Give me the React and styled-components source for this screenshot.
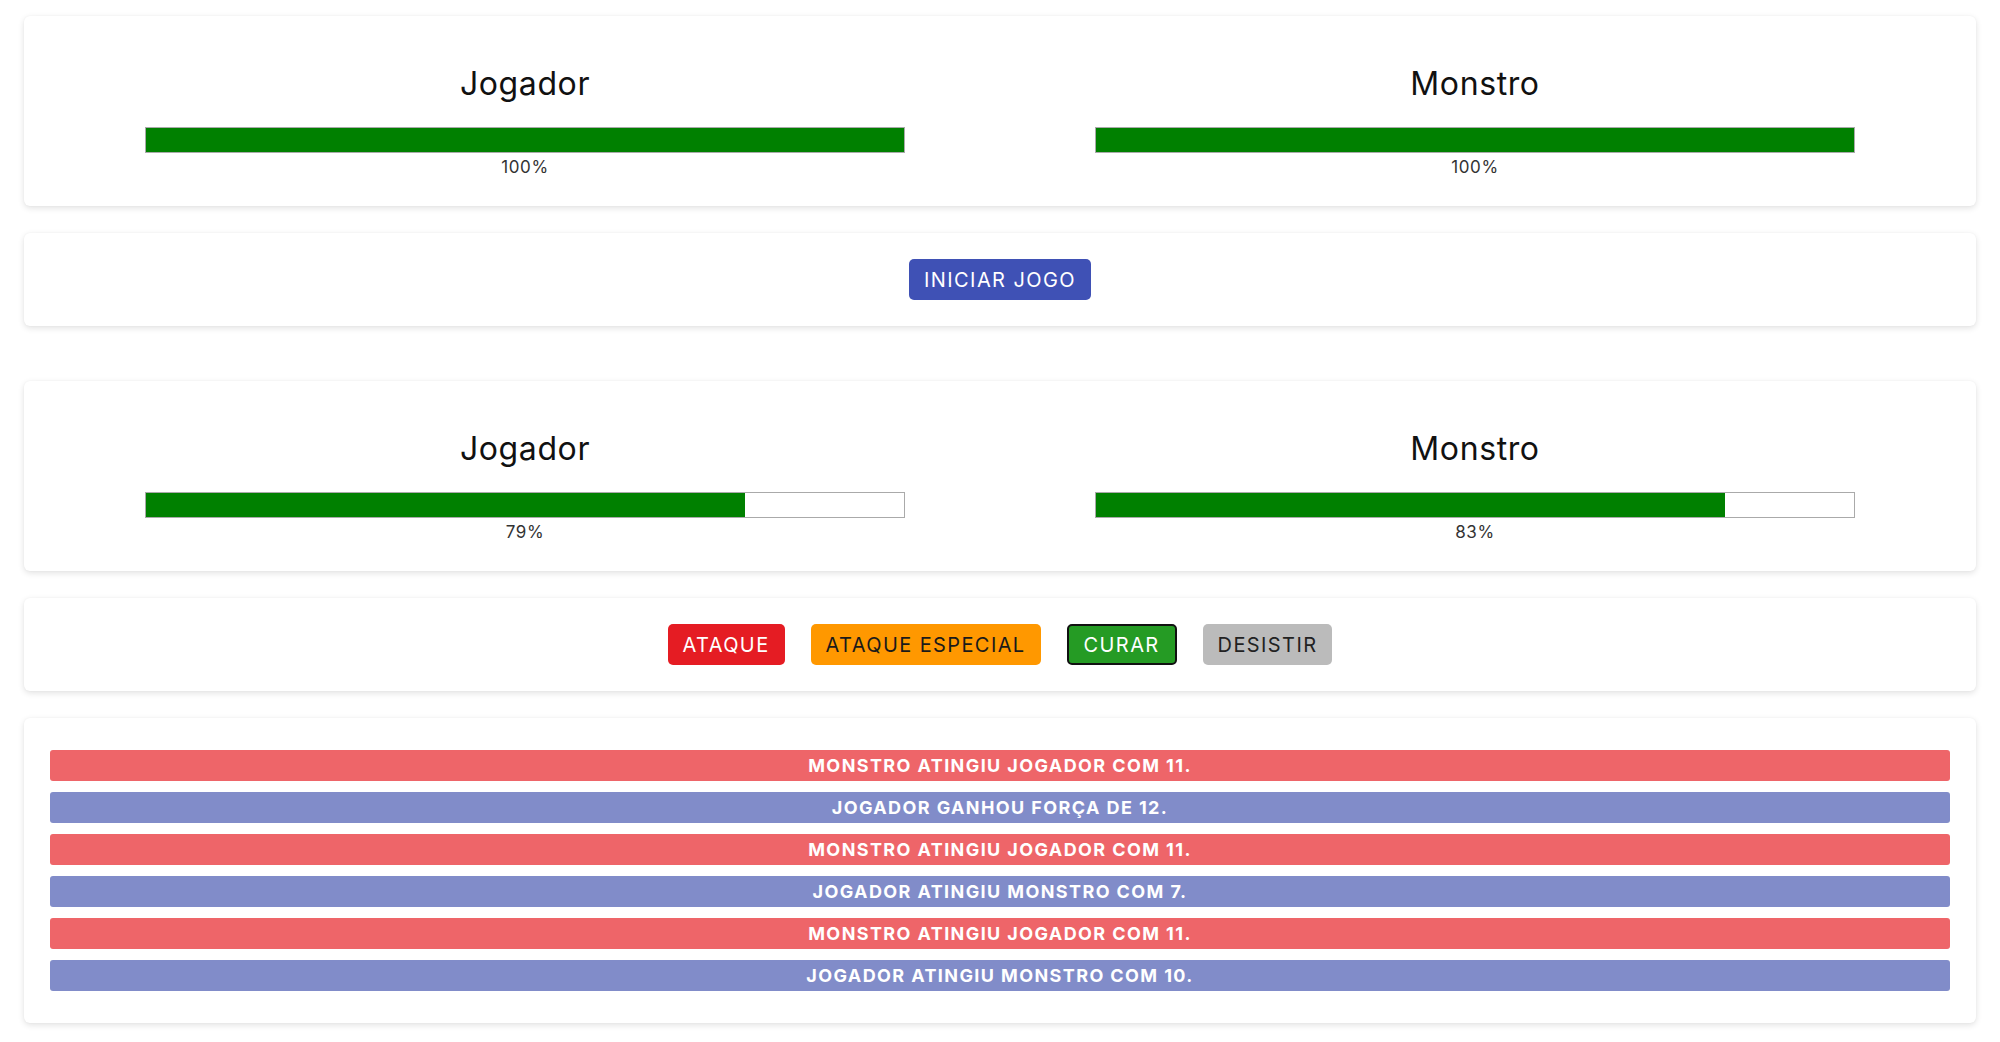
import React from 'react';
import styled, { createGlobalStyle } from 'styled-components';

const GlobalStyle = createGlobalStyle`
  html, body {
    margin: 0;
    padding: 0;
    background: #ffffff;
  }
  body {
    font-family: Inter, "Liberation Sans", Arial, sans-serif;
    color: #111;
  }
`;

const players = [
    {name: 'Jogador', life: 100},
    {name: 'Monstro', life: 100},
];

const playersInGame = [
    {name: 'Jogador', life: 79},
    {name: 'Monstro', life: 83},
];

const logs = [
    {kind: 'monster', text: 'Monstro atingiu Jogador com 11.'},
    {kind: 'player', text: 'Jogador ganhou força de 12.'},
    {kind: 'monster', text: 'Monstro atingiu Jogador com 11.'},
    {kind: 'player', text: 'Jogador atingiu Monstro com 7.'},
    {kind: 'monster', text: 'Monstro atingiu Jogador com 11.'},
    {kind: 'player', text: 'Jogador atingiu Monstro com 10.'},
];

const Scores = ({list, spaced}) => (
    <ScoresCard spaced={spaced}>
        {list.map(p => (
            <Score key={p.name}>
                <h1>{p.name}</h1>
                <LifeBar>
                    <Life style={{width: `${p.life}%`}}/>
                </LifeBar>
                <LifeText>{p.life}%</LifeText>
            </Score>
        ))}
    </ScoresCard>
);

export default () => {
    return (
        <Page>
            <GlobalStyle/>
            <Scores list={players}/>
            <Panel>
                <Button color="#3f51b5">Iniciar jogo</Button>
            </Panel>
            <Scores list={playersInGame} spaced/>
            <Panel>
                <Button color="#e51c23">Ataque</Button>
                <Button color="#ff9800" text="#1a1a1a">Ataque especial</Button>
                <Button color="#259b24" bordered>Curar</Button>
                <Button color="#bbbbbb" text="#222">Desistir</Button>
            </Panel>
            <LogPanel>
                <ul>
                    {logs.map((l, i) => (
                        <LogItem key={i} kind={l.kind}>{l.text}</LogItem>
                    ))}
                </ul>
            </LogPanel>
        </Page>
    )
};

const Page = styled.div`
  padding: 16px 24px;
  display: flex;
  flex-direction: column;
  gap: 27px;
`;

const Card = styled.div`
  background: #fff;
  border-radius: 6px;
  box-shadow: 0 2px 6px rgba(0, 0, 0, 0.12), 0 0 2px rgba(0, 0, 0, 0.04);
  padding: 26px;
  box-sizing: border-box;
`;

const ScoresCard = styled(Card)`
  display: flex;
  height: 190px;
  padding-top: 48px;
  margin-top: ${p => p.spaced ? '28px' : '0'};
`;

const Score = styled.div`
  flex: 1;
  display: flex;
  flex-direction: column;
  align-items: center;

  h1 {
    margin: 0;
    font-size: 32px;
    line-height: 40px;
    font-weight: 400;
    letter-spacing: 0.6px;
    color: #111;
  }
`;

const LifeBar = styled.div`
  width: 80%;
  height: 30px;
  margin-top: 23px;
  border: 1px solid #aaa;
  box-sizing: border-box;
  background: #fff;
  display: flex;
`;

const Life = styled.div`
  height: 100%;
  background: #008000;
`;

const LifeText = styled.div`
  padding-top: 1px;
  font-size: 17px;
  line-height: 26px;
  letter-spacing: 0.6px;
  color: #333;
`;

const Panel = styled(Card)`
  display: flex;
  justify-content: center;
  gap: 26px;
  height: 93px;
  align-items: center;
`;

const Button = styled.button`
  height: 41px;
  padding: 0 15px;
  box-sizing: border-box;
  border: ${p => p.bordered ? '2px solid #111' : 'none'};
  border-radius: 5px;
  background: ${p => p.color};
  color: ${p => p.text || '#fff'};
  font-family: Inter, "Liberation Sans", Arial, sans-serif;
  font-size: 20px;
  letter-spacing: 1.4px;
  text-transform: uppercase;
  cursor: pointer;
`;

const LogPanel = styled(Card)`
  padding: 32px 26px;

  ul {
    list-style: none;
    margin: 0;
    padding: 0;
    display: flex;
    flex-direction: column;
    gap: 11px;
  }
`;

const LogItem = styled.li`
  height: 31px;
  line-height: 31px;
  border-radius: 3px;
  background: ${p => p.kind === 'monster' ? '#ee6569' : '#818cc9'};
  color: #fff;
  font-size: 18px;
  font-weight: 700;
  letter-spacing: 1.4px;
  text-align: center;
  text-transform: uppercase;
`;
